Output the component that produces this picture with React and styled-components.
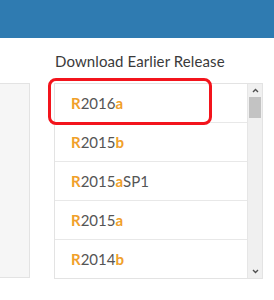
import React from 'react'
import styled, { createGlobalStyle } from 'styled-components'

const Global = createGlobalStyle`
  body {
    margin: 0;
    background: #fff;
    font-family: Lato, "Open Sans", sans-serif;
  }
`;

const Topbar = styled.div`
  height: 38px;
  background: #2f7bb1;
`;

const Content = styled.div`
  display: flex;
  align-items: flex-start;
`;

const Sidepanel = styled.div`
  width: 29px;
  height: 193px;
  margin-top: 45px;
  background: #f6f6f6;
  border: 1px solid #e3e3e3;
  border-left: none;
`;

const Column = styled.div`
  margin-left: 24px;
  width: 209px;
  display: flex;
  flex-direction: column;
`;

const Heading = styled.h2`
  margin: 0;
  height: 45px;
  display: flex;
  align-items: center;
  padding-left: 1px;
  font-size: 15px;
  font-weight: 400;
  color: #3a3a3a;
  letter-spacing: 0.1px;
`;

const Listbox = styled.div`
  position: relative;
  display: flex;
  height: 194px;
  border: 1px solid #e3e3e3;
  border-bottom: 1px solid #e3e3e3;
`;

const Rows = styled.div`
  flex: 1;
  display: flex;
  flex-direction: column;
`;

const Row = styled.div`
  height: 38px;
  display: flex;
  align-items: center;
  padding-left: 16px;
  border-bottom: 1px solid #e8e8e8;
  font-size: 15px;
  color: #555;
  &:last-child {
    border-bottom: none;
  }
`;

const Accent = styled.span`
  color: #f0a02a;
  font-weight: 700;
`;

const Highlight = styled.div`
  position: absolute;
  left: -7px;
  top: -6px;
  width: 158px;
  height: 41px;
  border: 3px solid #f3141c;
  border-radius: 8px;
  pointer-events: none;
`;

const Scrollbar = styled.div`
  width: 14px;
  background: #f0f0f0;
  border-left: 1px solid #e6e6e6;
  display: flex;
  flex-direction: column;
  align-items: center;
`;

const Arrow = styled.div`
  height: 13px;
  display: flex;
  align-items: center;
  justify-content: center;
  margin-top: ${p => p.$bottom ? 'auto' : '0'};
`;

const Thumb = styled.div`
  width: 12px;
  height: 21px;
  background: #c3c3c3;
`;

const releases = [
  ['2016', 'a', ''],
  ['2015', 'b', ''],
  ['2015', 'a', 'SP1'],
  ['2015', 'a', ''],
  ['2014', 'b', ''],
];

function Chevron({ down }) {
  return (
    <svg width="7" height="5" viewBox="0 0 7 5">
      <path d={down ? 'M1 1 L3.5 3.5 L6 1' : 'M1 4 L3.5 1.5 L6 4'} fill="none" stroke="#505050" strokeWidth="1.4" />
    </svg>
  )
}

function App() {
  return (
    <>
      <Global />
      <Topbar />
      <Content>
        <Sidepanel />
        <Column>
          <Heading>Download Earlier Release</Heading>
          <Listbox>
            <Rows>
              {releases.map(([year, half, sp]) => (
                <Row key={year + half + sp}>
                  <Accent>R</Accent>{year}<Accent>{half}</Accent>{sp}
                </Row>
              ))}
            </Rows>
            <Scrollbar>
              <Arrow><Chevron /></Arrow>
              <Thumb />
              <Arrow $bottom><Chevron down /></Arrow>
            </Scrollbar>
            <Highlight />
          </Listbox>
        </Column>
      </Content>
    </>
  )
}

export default App
